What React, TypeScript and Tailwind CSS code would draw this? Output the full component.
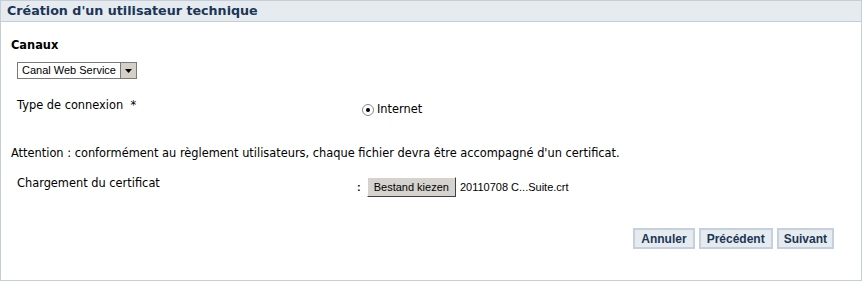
import { useState } from 'react'

// Wizard step: technical user creation
export default function App() {
  const [canal, setCanal] = useState('ws')

  return (
    <div className="w-[862px] h-[282px] bg-white font-['DejaVu_Sans',Verdana,sans-serif] text-[11.4px] text-black">
      <div className="h-[281px] border border-[#c5ced8] flex flex-col">
        <div className="h-[21px] bg-[#e6ebf0] border-b border-[#c5ced8] pl-[6px] flex items-center">
          <h1 className="text-[12.7px] font-bold text-[#1b3656] leading-none">Création d'un utilisateur technique</h1>
        </div>

        <div className="flex-1 flex flex-col pl-[10px] pr-[27px]">
          <div className="mt-[17px] font-bold leading-[13px]">Canaux</div>

          <div className="mt-[10px] ml-[6px] flex">
            <div className="h-[17px] w-[120px] border border-[#7a7a7a] flex items-stretch font-['Liberation_Sans',Arial,sans-serif] text-[11px]">
              <select
                value={canal}
                onChange={(e) => setCanal(e.target.value)}
                className="appearance-none flex-1 px-[4px] leading-[15px] outline-none bg-white"
              >
                <option value="ws">Canal Web Service</option>
              </select>
              <div className="w-[16px] bg-[#d4d0c8] border-l border-[#7a7a7a] flex items-center justify-center">
                <svg width="7" height="4" viewBox="0 0 7 4">
                  <path d="M0 0h7L3.5 4z" fill="#000" />
                </svg>
              </div>
            </div>
          </div>

          <div className="mt-[20px] ml-[6px] flex">
            <div className="w-[345px] leading-[13px]">Type de connexion&nbsp;&nbsp;*</div>
            <label className="mt-[4px] flex items-center gap-[3px] leading-[13px]">
              <span className="w-[12px] h-[12px] rounded-full border border-[#8a8a8a] bg-white flex items-center justify-center">
                <span className="w-[4px] h-[4px] rounded-full bg-black" />
              </span>
              Internet
            </label>
          </div>

          <p className="mt-[31px] leading-[13px]">
            Attention : conformément au règlement utilisateurs, chaque fichier devra être accompagné d'un certificat.
          </p>

          <div className="mt-[17px] ml-[6px] flex">
            <div className="w-[340px] leading-[13px]">Chargement du certificat</div>
            <div className="flex items-center gap-[4px] font-['Liberation_Sans',Arial,sans-serif] text-[11px]">
              <span className="font-bold">:</span>
              <button className="ml-[2px] h-[20px] px-[6px] bg-[#d6d3ce] border border-t-white border-l-white border-r-[#404040] border-b-[#404040] text-black">
                Bestand kiezen
              </button>
              <span>20110708 C...Suite.crt</span>
            </div>
          </div>

          <div className="mt-[31px] flex justify-end gap-[4px] font-['Liberation_Sans',Arial,sans-serif] text-[12px] font-bold text-[#1b3656]">
            <button className="h-[21px] px-[6px] bg-[#e6ebf0] border-2 border-[#c5d0dc]">Annuler</button>
            <button className="h-[21px] px-[6px] bg-[#e6ebf0] border-2 border-[#c5d0dc]">Précédent</button>
            <button className="h-[21px] px-[5px] bg-[#e6ebf0] border-2 border-[#c5d0dc]">Suivant</button>
          </div>
        </div>
      </div>
    </div>
  )
}
